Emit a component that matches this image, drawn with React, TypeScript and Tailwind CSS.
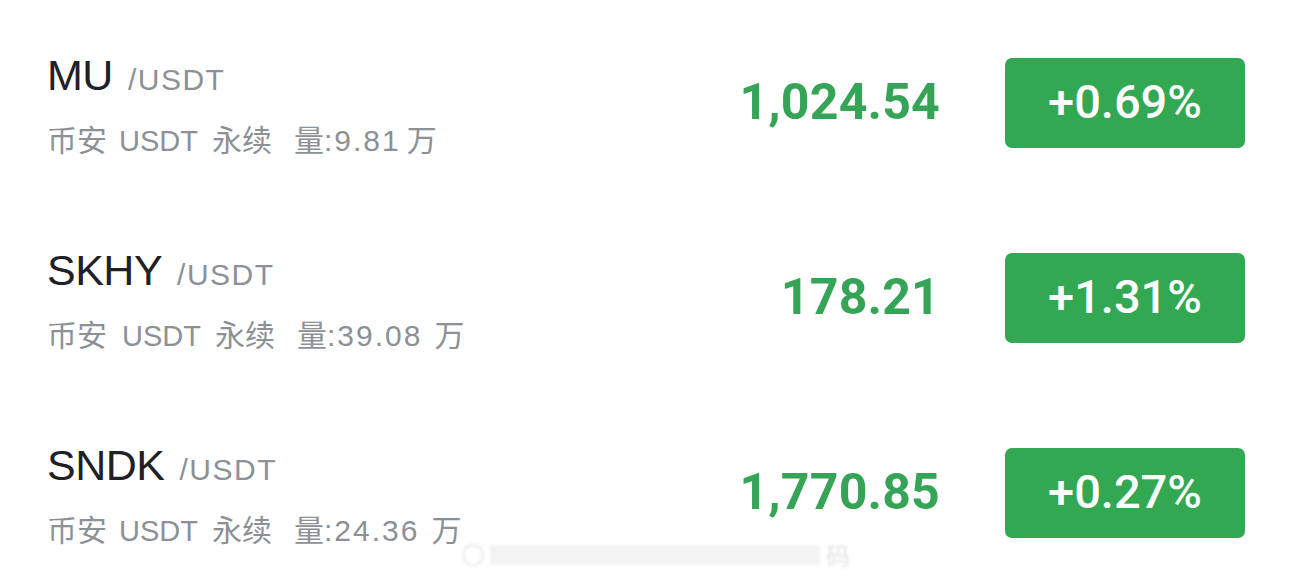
type RowData = {
  sym: string;
  gap1: string;
  vol: string;
  wan: string;
  price: string;
  change: string;
};

const rows: RowData[] = [
  { sym: "MU", gap1: "ml-[12px]", vol: "9.81", wan: "ml-[6px]", price: "1,024.54", change: "+0.69%" },
  { sym: "SKHY", gap1: "ml-[15px]", vol: "39.08", wan: "ml-[12px]", price: "178.21", change: "+1.31%" },
  { sym: "SNDK", gap1: "ml-[12px]", vol: "24.36", wan: "ml-[12px]", price: "1,770.85", change: "+0.27%" },
];

const latin = { fontFamily: '"Liberation Sans", "Noto Sans CJK SC", sans-serif' };
const cjk = { fontFamily: '"Noto Sans CJK SC", sans-serif' };
const roboto = { fontFamily: 'Roboto, "Liberation Sans", sans-serif' };

function Row({ sym, gap1, vol, wan, price, change }: RowData) {
  return (
    <div className="flex items-center h-[195px] pl-[47px] pr-[45px]">
      <div className="flex flex-col flex-1" style={latin}>
        <div className="flex items-baseline h-[50px] leading-[50px]">
          <span className="text-[43px] tracking-[-0.5px] text-[#1f2124]">{sym}</span>
          <span className="ml-[15px] text-[30px] tracking-[1.5px] text-[#8c9196]">/USDT</span>
        </div>
        <div className="mt-[20px] h-[36px] leading-[36px] flex items-baseline text-[29px] text-[#8c9196] whitespace-pre">
          <span className="text-[30px]" style={cjk}>币安</span>
          <span className={gap1}>USDT</span>
          <span className="ml-[14px] text-[30px]" style={cjk}>永续</span>
          <span className="ml-[22px] text-[30px]" style={cjk}>量</span>
          <span className="text-[30px] tracking-[2px]">:{vol}</span>
          <span className={`${wan} text-[30px]`} style={cjk}>万</span>
        </div>
      </div>
      <div className="text-[50px] font-bold text-[#36a457] tracking-[0.2px]" style={roboto}>
        {price}
      </div>
      <div
        className="ml-[65px] w-[240px] h-[90px] rounded-[7px] bg-[#33a853] flex items-center justify-center text-white text-[47px] font-medium"
        style={roboto}
      >
        {change}
      </div>
    </div>
  );
}

export default function App() {
  return (
    <div className="relative w-[1290px] h-[583px] overflow-hidden bg-white pt-[5px]">
      {rows.map((r) => (
        <Row key={r.sym} {...r} />
      ))}
      {/* faint watermark */}
      <div className="absolute left-[462px] top-[537px] flex items-center gap-[6px] opacity-60 blur-[1.5px]">
        <span className="w-[22px] h-[22px] rounded-full border-2 border-[#dcdcdc]" />
        <span className="w-[330px] h-[20px] bg-[#ececec]" />
        <span className="text-[24px] text-[#cfcfcf]" style={cjk}>码</span>
      </div>
    </div>
  );
}
